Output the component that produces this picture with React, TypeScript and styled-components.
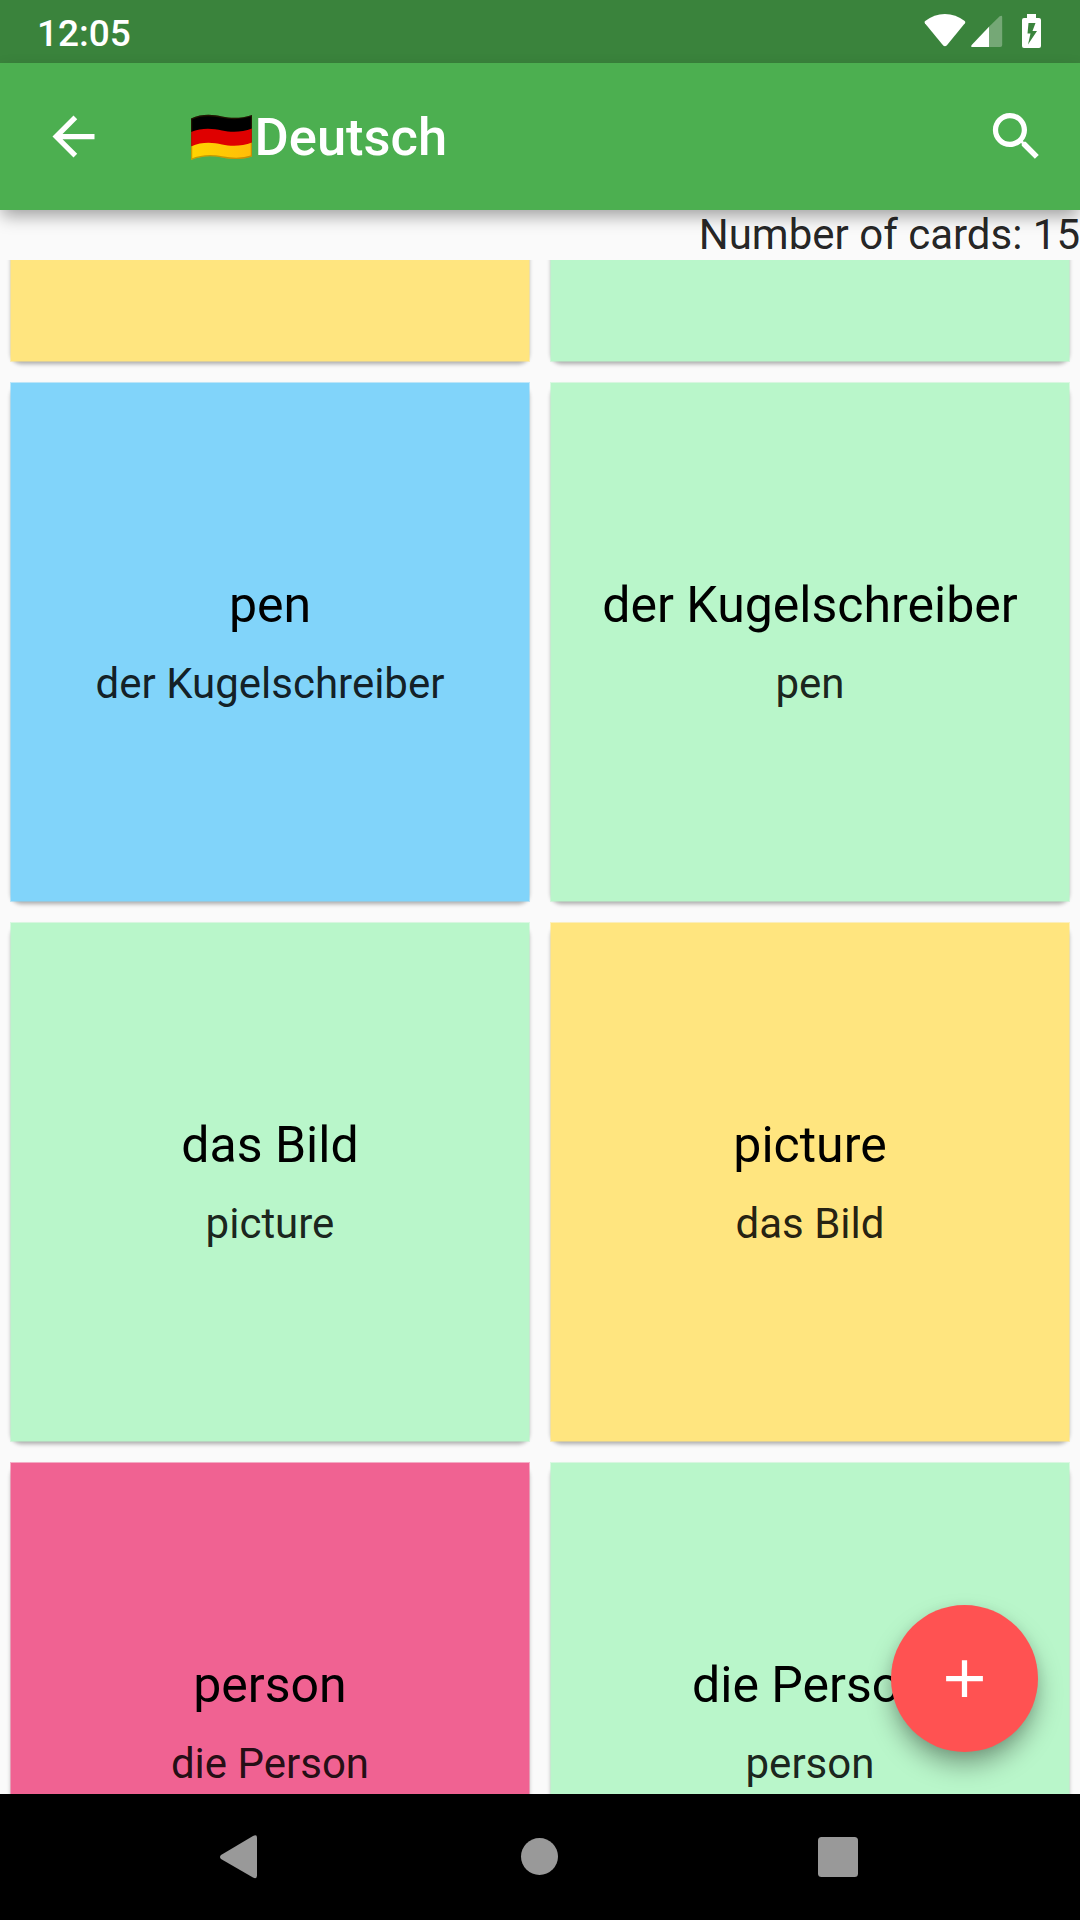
import React from "react";
import styled, { createGlobalStyle } from "styled-components";

const GlobalStyle = createGlobalStyle`
  *, *::before { box-sizing: border-box; }
  body { margin: 0; background: #fafafa; font-family: Roboto, sans-serif; }
  svg { display: block; flex: none; }
`;

const Screen = styled.div`
  position: relative;
  display: flex;
  flex-direction: column;
  width: 1080px;
  height: 1920px;
  overflow: hidden;
  background: #fafafa;
`;

const StatusBar = styled.div`
  display: flex;
  align-items: center;
  justify-content: space-between;
  flex: none;
  height: 63px;
  padding: 0 39px 0 37px;
  background: #3a833c;
  color: #fff;
`;

const Clock = styled.time`
  font-size: 37px;
  font-weight: 500;
  line-height: 44px;
  padding-top: 5px;
`;

const StatusIcons = styled.div`
  display: flex;
  align-items: flex-start;
  height: 63px;
  padding-top: 14px;
`;

const AppBar = styled.header`
  position: relative;
  display: flex;
  align-items: center;
  flex: none;
  height: 147px;
  padding: 0 32px 0 42px;
  background: #4caf50;
  color: #fff;
  box-shadow: 0 8px 16px -2px rgba(0, 0, 0, 0.36);
`;

const IconButton = styled.button`
  display: flex;
  border: 0;
  padding: 0;
  background: none;
  color: inherit;
`;

const Title = styled.h1`
  display: flex;
  align-items: center;
  flex: 1;
  gap: 2.5px;
  margin: 0 0 0 84px;
  font-size: 52.5px;
  font-weight: 500;
  line-height: 62px;
`;

const CardCount = styled.div`
  flex: none;
  height: 50px;
  font-size: 42px;
  line-height: 50px;
  text-align: right;
  white-space: nowrap;
  color: rgba(0, 0, 0, 0.87);
`;

const Viewport = styled.main`
  flex: 1;
  min-height: 0;
  overflow: hidden;
`;

const CardGrid = styled.div`
  isolation: isolate;
  display: grid;
  grid-template-columns: repeat(2, 520px);
  grid-auto-rows: 520px;
  gap: 20px;
  margin-top: -418px;
  padding: 0 10px;
`;

const Card = styled.article<{ $color: string }>`
  position: relative;
  display: flex;
  flex-direction: column;
  align-items: center;
  justify-content: center;
  gap: 24px;
  border: 1px solid ${(p) => p.$color}80;
  background: ${(p) => p.$color};
  background-clip: padding-box;

  &::before {
    content: "";
    position: absolute;
    inset: 0;
    z-index: -1;
    border-radius: 10px;
    box-shadow: 0 3px 4px rgba(0, 0, 0, 0.32);
  }
`;

const Word = styled.div`
  margin-top: -1px;
  font-size: 50px;
  line-height: 60px;
  color: #000;
`;

const Translation = styled.div`
  font-size: 42px;
  line-height: 50px;
  color: rgba(0, 0, 0, 0.87);
`;

const AddButton = styled.button`
  position: absolute;
  right: 42px;
  bottom: 168px;
  display: flex;
  align-items: center;
  justify-content: center;
  width: 147px;
  height: 147px;
  padding: 0;
  border: 0;
  border-radius: 50%;
  background: #ff5252;
  color: #fff;
  box-shadow: 0 14px 26px -2px rgba(0, 0, 0, 0.36), 0 2px 12px rgba(0, 0, 0, 0.07);
`;

const NavBar = styled.nav`
  display: flex;
  align-items: center;
  justify-content: space-between;
  flex: none;
  height: 126px;
  padding: 0 222px 0 220px;
  background: #000;
  color: #999;
`;

const GREEN = "#b9f6ca";
const AMBER = "#ffe57f";
const BLUE = "#81d4fa";
const PINK = "#f06292";

const cards = [
  { color: AMBER, word: "", translation: "" },
  { color: GREEN, word: "", translation: "" },
  { color: BLUE, word: "pen", translation: "der Kugelschreiber" },
  { color: GREEN, word: "der Kugelschreiber", translation: "pen" },
  { color: GREEN, word: "das Bild", translation: "picture" },
  { color: AMBER, word: "picture", translation: "das Bild" },
  { color: PINK, word: "person", translation: "die Person" },
  { color: GREEN, word: "die Person", translation: "person" },
];

const MaterialIcon = ({ d }: { d: string }) => (
  <svg width="63" height="63" viewBox="0 0 24 24" fill="currentColor">
    <path d={d} />
  </svg>
);

const GermanFlag = () => (
  <svg width="63" height="46" viewBox="0 0 63 46">
    <defs>
      <clipPath id="flag">
        <path d="M2 4.500C13 -.5 24 .5 33 2.500S53 4.500 63 1V42.500C53 46 43 45.500 33 43.500S13 41.500 2 46Z" />
      </clipPath>
      <linearGradient id="gold" x1="0" x2="1">
        <stop offset="0" stopColor="#ffd500" />
        <stop offset="1" stopColor="#ffbd08" />
      </linearGradient>
    </defs>
    <g clipPath="url(#flag)">
      <path fill="#000" d="M0 0H63V20H0Z" />
      <path fill="#df0000" d="M2 18C13 13.500 24 14.500 33 16.500S53 18.500 63 14.500V32H2Z" />
      <path fill="url(#gold)" d="M2 32.500C13 27.500 24 28.500 33 30.500S53 32.500 63 28.500V46H2Z" />
      <path
        fill="none"
        stroke="#5c3c00"
        strokeOpacity=".35"
        strokeWidth="2.500"
        d="M2 4.500C13 -.5 24 .5 33 2.500S53 4.500 63 1V42.500C53 46 43 45.500 33 43.500S13 41.500 2 46Z"
      />
    </g>
  </svg>
);

const SystemIcons = () => (
  <StatusIcons>
    <svg width="118" height="35" viewBox="0 0 118 35" fill="#fff">
      <g transform="translate(.7 0)">
        <path d="M1.200 9.300Q.2 8 1.500 7C7.500 2.500 14 0 21.200 0S35 2.500 41 7Q42.200 8 41.200 9.300L23 31.500Q21.200 33 19.500 31.500Z" />
        <path d="M76 2.200Q78.500 .8 78.500 3V31Q78.500 33 76.500 33H65.300V12.700Z" fillOpacity=".3" />
        <path d="M65.300 12.700V33H49Q46.500 33 48 31Z" />
      </g>
      <path
        fillRule="evenodd"
        d="M104 0H113V4H116Q118 4 118 6V32Q118 34 116 34H101Q99 34 99 32V6Q99 4 101 4H104ZM105.500 9L104.500 19.500H107.500L105 30.500L114 17H109.500L112.500 9Z"
      />
    </svg>
  </StatusIcons>
);

export default function App() {
  return (
    <Screen>
      <GlobalStyle />
      <StatusBar>
        <Clock>12:05</Clock>
        <SystemIcons />
      </StatusBar>
      <AppBar>
        <IconButton aria-label="Back">
          <MaterialIcon d="M20 11H7.830l5.590-5.590L12 4l-8 8 8 8 1.410-1.410L7.830 13H20v-2z" />
        </IconButton>
        <Title>
          <GermanFlag />
          Deutsch
        </Title>
        <IconButton aria-label="Search">
          <MaterialIcon d="M15.500 14h-.79l-.28-.27C15.410 12.590 16 11.110 16 9.500 16 5.910 13.090 3 9.500 3S3 5.910 3 9.500 5.910 16 9.500 16c1.610 0 3.090-.59 4.230-1.570l.27.28v.79l5 4.990L20.490 19l-4.990-5zm-6 0C7.010 14 5 11.990 5 9.500S7.010 5 9.500 5 14 7.010 14 9.500 11.990 14 9.500 14z" />
        </IconButton>
      </AppBar>
      <CardCount>Number of cards: 15</CardCount>
      <Viewport>
        <CardGrid>
          {cards.map((card, i) => (
            <Card key={i} $color={card.color}>
              {card.word && <Word>{card.word}</Word>}
              {card.translation && <Translation>{card.translation}</Translation>}
            </Card>
          ))}
        </CardGrid>
      </Viewport>
      <NavBar>
        <svg width="37" height="44" viewBox="0 0 37 44" fill="currentColor">
          <path d="M1 24Q-1 22 1 20L33 1Q37 -1 37 2.500V40.500Q37 44.500 33 42.500Z" />
        </svg>
        <svg width="41" height="38" viewBox="0 0 41 38" fill="currentColor">
          <circle cx="22.500" cy="18.500" r="18.500" />
        </svg>
        <svg width="40" height="40" viewBox="0 0 40 40" fill="currentColor">
          <rect width="40" height="40" rx="3.500" />
        </svg>
      </NavBar>
      <AddButton aria-label="Add card">
        <MaterialIcon d="M19 13h-6v6h-2v-6H5v-2h6V5h2v6h6v2z" />
      </AddButton>
    </Screen>
  );
}
